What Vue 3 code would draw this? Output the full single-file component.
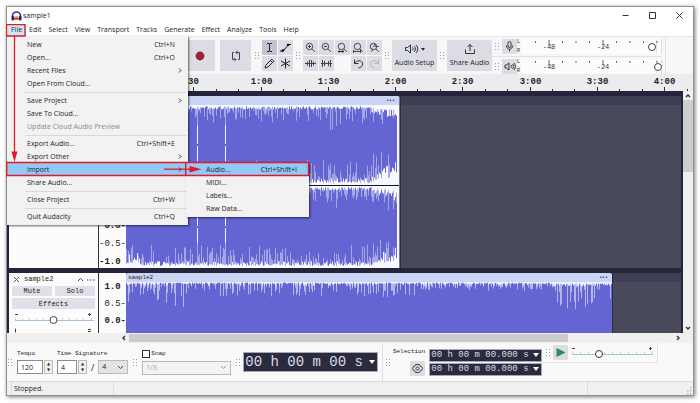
<script setup>
import { ref } from 'vue'

const menus = ['File', 'Edit', 'Select', 'View', 'Transport', 'Tracks', 'Generate', 'Effect', 'Analyze', 'Tools', 'Help']
const fileMenu = [
  [{ t: 'New', k: 'Ctrl+N' }, { t: 'Open...', k: 'Ctrl+O' }, { t: 'Recent Files', sub: true }, { t: 'Open From Cloud...' }],
  [{ t: 'Save Project', sub: true }, { t: 'Save To Cloud...' }, { t: 'Update Cloud Audio Preview', off: true }],
  [{ t: 'Export Audio...', k: 'Ctrl+Shift+E' }, { t: 'Export Other', sub: true }, { t: 'Import', sub: true, on: true }, { t: 'Share Audio...' }],
  [{ t: 'Close Project', k: 'Ctrl+W' }],
  [{ t: 'Quit Audacity', k: 'Ctrl+Q' }],
]
const importMenu = [{ t: 'Audio...', k: 'Ctrl+Shift+I', on: true }, { t: 'MIDI...' }, { t: 'Labels...' }, { t: 'Raw Data...' }]

const tempo = ref('120')
const beats = ref('4')
const snap = ref(false)

const ORIGIN = 119
const PX_PER_10S = 22.42
const ticks = Array.from({ length: 26 }, (_, i) => ({
  x: Math.round(ORIGIN + i * PX_PER_10S) + 0.5,
  major: i % 3 === 0,
  label: i < 6 ? String(i * 10) : `${Math.floor(i / 6)}:${i % 6 ? '30' : '00'}`,
}))

const meterTicks = Array.from({ length: 10 }, (_, i) => ({ x: 14.5 + i * 13.5, label: i === 1 ? '-48' : i === 5 ? '-24' : '' }))

function rng(seed) {
  let s = seed
  return () => {
    s = (s * 1664525 + 1013904223) % 4294967296
    return s / 4294967296
  }
}

function edge(width, seed, base, spike) {
  const r = rng(seed)
  return Array.from({ length: width }, (_, x) => {
    const b = base(x)
    const depth = b * (0.4 + 0.8 * r())
    const hit = r() < 0.46
    return { solid: depth + (hit ? spike(x) * r() ** 1.4 + 2 : 0), soft: hit ? b * 0.3 + r() * 3 : depth - 0.5 }
  })
}

function stereo(height, seed, top, bottom, gaps) {
  const a = edge(271, seed, top.base, top.spike)
  const b = edge(271, seed + 7, bottom.base, bottom.spike)
  let solid = ''
  let soft = ''
  a.forEach((p, x) => {
    const q = b[x]
    const px = x + 0.5
    if (gaps.includes(x)) {
      soft += `M${px} 2V${height * 0.25}M${px} ${height * 0.7}V${height - 3}`
      solid += `M${px} ${height / 2 - 1}V${height / 2 + 1}`
      return
    }
    soft += `M${px} ${p.soft.toFixed(1)}V${(height - q.soft).toFixed(1)}`
    solid += `M${px} ${p.solid.toFixed(1)}V${(height - q.solid).toFixed(1)}`
  })
  return { solid, soft }
}

const tail = (x) => (x > 245 ? 3 + (x - 245) * 0.25 : 0)
const gaps = [71, 99]
const left = stereo(80, 11,
  { base: (x) => 4 + tail(x), spike: (x) => (x > 198 && x < 218 ? 19 : 12) },
  { base: (x) => 6 + tail(x) * 1.6, spike: () => 17 }, gaps)
const right = stereo(82, 57,
  { base: (x) => 4 + tail(x), spike: (x) => (x > 198 && x < 218 ? 22 : 13) },
  { base: (x) => (x < 14 ? 13 : 6 + tail(x) * 1.3), spike: () => 16 }, gaps)

const second = (() => {
  const pts = edge(486, 91,
    (x) => (x > 424 ? 4 : 2),
    (x) => (x < 62 ? 22 : x > 424 ? 22 : x > 290 && x < 420 ? 5 : 11))
  let solid = ''
  let soft = ''
  pts.forEach((p, x) => {
    soft += `M${x + 0.5} ${p.soft.toFixed(1)}V90`
    solid += `M${x + 0.5} ${p.solid.toFixed(1)}V90`
  })
  return { solid, soft }
})()
</script>

<template>
  <div class="page">
    <main class="win">
      <header class="title">
        <svg class="logo" width="11" height="10" viewBox="0 0 11 10">
          <path d="M1.500 6V5a4 4 0 0 1 8 0v1" fill="none" stroke="#2a2fb5" stroke-width="1.600" />
          <rect x="0.500" y="5" width="2.600" height="4.400" rx="1" fill="#1c2190" />
          <rect x="7.900" y="5" width="2.600" height="4.400" rx="1" fill="#1c2190" />
          <path d="M3 7l1-2 1 1 .8-1.400L6.800 6 7.600 5v4H3z" fill="#f08a1c" />
          <path d="M3 7.600h5" stroke="#d5331b" />
        </svg>
        <span class="name">sample1</span>
        <button class="wb" aria-label="Minimize"><svg width="9" height="9"><path d="M1.500 4.500h6" stroke="#333" /></svg></button>
        <button class="wb" aria-label="Maximize"><svg width="9" height="9"><path d="M1.500 1.500h6v6h-6z" fill="none" stroke="#333" /></svg></button>
        <button class="wb" aria-label="Close"><svg width="9" height="9"><path d="M1.500 1.500l6 6M7.500 1.500l-6 6" stroke="#333" /></svg></button>
      </header>

      <nav class="menubar">
        <button v-for="m in menus" :key="m" :class="{ open: m === 'File' }">{{ m }}</button>
      </nav>

      <section class="tools">
        <i class="grip"></i>
        <div class="transport">
          <button class="big" aria-label="Pause"><svg width="12" height="12"><path d="M3 2h2v8H3zM7 2h2v8H7z" /></svg></button>
          <button class="big" aria-label="Play"><svg width="12" height="12"><path d="M3 1l8 5-8 5z" fill="#2f8a55" /></svg></button>
          <button class="big" aria-label="Stop"><svg width="12" height="12"><path d="M2 2h8v8H2z" /></svg></button>
          <button class="big" aria-label="Skip to start"><svg width="12" height="12"><path d="M2 2h1v8H2zM10 2v8L4 6z" /></svg></button>
          <button class="big" aria-label="Skip to end"><svg width="12" height="12"><path d="M9 2h1v8H9zM2 2v8l6-4z" /></svg></button>
          <button class="big" aria-label="Record"><svg width="12" height="12"><circle cx="6" cy="6" r="4.400" fill="#9c2430" /></svg></button>
        </div>
        <button class="big loop" aria-label="Loop">
          <svg width="12" height="12" fill="none" stroke="#444"><path d="M4 2.500H2.500V9.500H5.500M8 9.500h1.500V2.500H6" /><path d="M7.500 .8L5.800 2.500l1.700 1.700M4.300 7.800l1.700 1.700L4.300 11.200" /></svg>
        </button>
        <i class="grip"></i>
        <div class="cells two">
          <button class="sq sel" aria-label="Selection tool"><svg width="11" height="11" fill="none" stroke="#222"><path d="M3 1.500h2l.5.5.5-.5h2M3 9.500h2l.5-.5.5.5h2M5.500 2v7" /></svg></button>
          <button class="sq" aria-label="Envelope tool"><svg width="11" height="11" fill="#111" stroke="#111"><path d="M0 9h3L7 4.500l1.500-2H11" fill="none" /><circle cx="3" cy="8.500" r=".9" /><circle cx="8" cy="3" r=".9" /></svg></button>
          <button class="sq" aria-label="Draw tool"><svg width="11" height="11" fill="none" stroke="#222"><path d="M1 10l.8-2.800L7.800 1.200l2 2-6 6zM6.500 2.500l2 2" /></svg></button>
          <button class="sq" aria-label="Multi-tool"><svg width="11" height="11" fill="none" stroke="#222"><path d="M5.500 .5v10M1 3l9 5M10 3L1 8" /></svg></button>
        </div>
        <i class="grip"></i>
        <div class="cells five">
          <button v-for="z in ['in', 'out', 'sel', 'fit', 'toggle']" :key="z" class="sq" :aria-label="'Zoom ' + z">
            <svg width="11" height="11" fill="none" stroke="#444">
              <circle cx="4.500" cy="4.500" r="3.200" /><path d="M7 7l2.800 2.800" />
              <path v-if="z === 'in'" d="M3 4.500h3M4.500 3v3" />
              <path v-if="z === 'out'" d="M3 4.500h3" />
              <path v-if="z === 'sel'" d="M1 9.500h6M2.500 8.300L1.200 9.500 2.500 10.700M5.500 8.300L6.800 9.500 5.500 10.700" stroke="#222" />
              <path v-if="z === 'fit'" d="M.5 9.500h7M.5 8v3M7.500 8v3" stroke="#222" stroke-width=".8" />
              <path v-if="z === 'toggle'" d="M4 5l2-3v2.500h4M2 6l2 2-2 2" stroke-width=".8" />
            </svg>
          </button>
          <button class="sq" aria-label="Trim"><svg width="11" height="11" stroke="#444"><path d="M0 5.500h11M2.500 3.500v4M4.500 2v7M6.500 2v7M8.500 3.500v4" /></svg></button>
          <button class="sq" aria-label="Silence"><svg width="11" height="11" stroke="#444"><path d="M0 5.500h11M1.500 2v7M3.500 3v5M7.500 3v5M9.500 2v7" /></svg></button>
          <span></span>
          <button class="sq" aria-label="Undo"><svg width="11" height="11" fill="none" stroke="#333"><path d="M1.500 1.500v4h4M1.500 5.500C3 2 9.500 1.500 9.500 6c0 2.500-2 3.500-4 4" /></svg></button>
          <button class="sq" aria-label="Redo" disabled><svg width="11" height="11" fill="none" stroke="#b5b6c0"><path d="M9.500 1.500v4h-4M9.500 5.500C8 2 1.500 1.500 1.500 6c0 2.500 2 3.500 4 4" /></svg></button>
        </div>
        <i class="grip"></i>
        <button class="wide">
          <svg width="22" height="12" fill="none" stroke="#333"><path d="M1.500 4.500h2L6.500 2v8L3.500 7.500h-2zM8.500 4.500c.8 1 .8 2 0 3M10.200 3.200c1.600 1.600 1.600 4 0 5.600M12 2c2.300 2.300 2.300 5.700 0 8" /><path d="M17 5h4l-2 2.800z" fill="#222" stroke="none" /></svg>
          <span>Audio Setup</span>
        </button>
        <i class="grip"></i>
        <button class="wide">
          <svg width="12" height="12" fill="none" stroke="#333"><path d="M1.500 6.500v4h9v-4M6 8V1.500M3.500 4L6 1.500 8.500 4" /></svg>
          <span>Share Audio</span>
        </button>
        <div class="meters">
          <div v-for="row in ['rec', 'play']" :key="row" class="meter">
            <i class="grip"></i>
            <button class="sq" :aria-label="row === 'rec' ? 'Record meter' : 'Playback meter'">
              <svg v-if="row === 'rec'" width="11" height="11" fill="none" stroke="#333"><rect x="4" y=".5" width="3" height="6" rx="1.500" /><path d="M2.500 4.500c0 5 6 5 6 0M5.500 8v2.500" /></svg>
              <svg v-else width="12" height="11" fill="none" stroke="#333"><path d="M1 4h1.500L5 2v7L2.500 7H1zM7 4c.8 1 .8 2 0 3M8.500 3c1.300 1.400 1.300 3.600 0 5M10 2c1.800 2 1.800 5 0 7" /></svg>
            </button>
            <span class="lr"><span>L</span><span>R</span></span>
            <svg class="scale" width="141" height="15">
              <rect width="141" height="15" fill="#fcfcfc" />
              <path d="M135.500 1v13M140.500 0v15" stroke="#dcdde0" fill="none" />
              <g v-for="t in meterTicks" :key="t.x">
                <path :d="`M${t.x} ${t.label ? 1 : 2}v${t.label ? 5 : 2}`" stroke="#666" />
                <text v-if="t.label" :x="t.x" y="10" text-anchor="middle">{{ t.label }}</text>
              </g>
              <circle :cx="row === 'rec' ? 131 : 137" cy="8" r="3.500" fill="#fff" stroke="#444" />
            </svg>
          </div>
        </div>
      </section>

      <svg class="ruler" width="100%" height="17">
        <g v-for="t in ticks" :key="t.x">
          <path :d="`M${t.x} ${t.major ? 13 : 15}V17`" stroke="#333" />
          <text v-if="t.major" :x="t.x" y="10" text-anchor="middle">{{ t.label }}</text>
        </g>
      </svg>

      <section class="work">
        <div class="tracks">
          <article class="track">
            <div class="panel"></div>
            <div class="amp first"><b>0.0-</b><span>-0.5-</span><b>-1.0&nbsp;</b></div>
            <div class="lane">
              <div class="clip one">
                <div class="chead"><span>sample1</span><i>•••</i></div>
                <svg width="273" height="163">
                  <g fill="none">
                    <path :d="left.soft" stroke="#a6a7e2" /><path :d="left.solid" stroke="#6464d3" />
                    <g transform="translate(0 81)"><path :d="right.soft" stroke="#a6a7e2" /><path :d="right.solid" stroke="#6464d3" /></g>
                    <path d="M0 80.500h273" stroke="#15151f" />
                  </g>
                </svg>
              </div>
              <div class="rest"><i></i></div>
            </div>
          </article>
          <article class="track">
            <div class="panel">
              <div class="prow">
                <svg width="7" height="7"><path d="M1 1l5 5M6 1L1 6" stroke="#555" /></svg>
                <span class="pn">sample2</span>
                <svg width="18" height="7"><path d="M1 5l2.500-2.500L6 5" fill="none" stroke="#444" /><path d="M10 4h1.500M13 4h1.500M16 4h1.500" stroke="#444" /></svg>
              </div>
              <div class="prow"><button>Mute</button><button>Solo</button></div>
              <div class="prow"><button>Effects</button></div>
              <svg class="gain" width="82" height="24" fill="none">
                <path d="M3 3.500h3M76 3.500h3M77.500 2v3" stroke="#444" />
                <path d="M3 9.500h80" stroke="#a9c0da" /><path d="M3.500 7v2M10.500 7v2M17.500 7v2M24.500 7v2M31.500 7v2M50.500 7v2M57.500 7v2M64.500 7v2M71.500 7v2M79.500 7v2" stroke="#c5d4e4" />
                <circle cx="41.500" cy="9" r="3.500" fill="#fff" stroke="#444" />
                <path d="M3.500 17.500v4M76 18.500h3M76 20.500h3" stroke="#444" />
              </svg>
            </div>
            <div class="amp"><b>1.0&nbsp;</b><span>0.5-</span><b>0.0-</b></div>
            <div class="lane">
              <div class="clip two">
                <div class="chead"><span>sample2</span><i>•••</i></div>
                <svg width="486" height="90" fill="none"><path :d="second.soft" stroke="#b4b5e8" /><path :d="second.solid" stroke="#6464d3" /></svg>
              </div>
              <div class="rest"><i></i></div>
            </div>
          </article>
        </div>
        <div class="vbar">
          <svg width="10" height="9"><path d="M3 6l2-2 2 2" fill="none" stroke="#333" stroke-width="1.400" /></svg>
          <i></i>
          <svg width="10" height="10"><path d="M3 4l2 2 2-2" fill="none" stroke="#333" stroke-width="1.400" /></svg>
        </div>
      </section>
      <div class="hbar">
        <svg width="8" height="10"><path d="M5 3L3 5l2 2" fill="none" stroke="#333" stroke-width="1.400" /></svg>
        <div><i></i></div>
        <svg width="8" height="10"><path d="M3 3l2 2-2 2" fill="none" stroke="#333" stroke-width="1.400" /></svg>
      </div>

      <section class="dock">
        <i class="grip"></i>
        <div class="field">
          <label for="tempo">Tempo</label>
          <div class="line"><input id="tempo" v-model="tempo" class="w25"><span class="spin"><i>▲</i><i>▼</i></span></div>
        </div>
        <div class="field">
          <label for="beats">Time Signature</label>
          <div class="line">
            <input id="beats" v-model="beats" class="w20"><span class="spin"><i>▲</i><i>▼</i></span>
            <span class="slash">/</span>
            <span class="pick small"><select aria-label="Beat unit"><option>4</option></select><svg width="7" height="5"><path d="M1 1l2.500 2.500L6 1" fill="none" stroke="#444" /></svg></span>
          </div>
        </div>
        <i class="grip"></i>
        <div class="field snap">
          <label><input v-model="snap" type="checkbox">Snap</label>
          <span class="pick off"><select aria-label="Snap to" disabled><option>1/8</option></select><svg width="7" height="5"><path d="M1 1l2.500 2.500L6 1" fill="none" stroke="#999" /></svg></span>
        </div>
        <i class="grip"></i>
        <div class="time"><output>00 h 00 m 00 s</output><svg width="6" height="4"><path d="M0 0h6L3 4z" fill="#fff" /></svg></div>
        <div class="selection">
          <i class="grip"></i>
          <div class="sl"><span>Selection</span>
            <button class="sq" aria-label="Selection settings"><svg width="11" height="11" fill="none" stroke="#444"><path d="M3.500 1.500h4L8.500 3.500h1l1 2-1 2H8.500l-1 2h-4l-1-2h-1l-1-2 1-2h1z" /><circle cx="5.500" cy="5.500" r="1.600" /></svg></button>
          </div>
          <div class="ranges">
            <div v-for="n in 2" :key="n" class="range"><output>00 h 00 m 00.000 s</output><svg width="6" height="4"><path d="M0 0h6L3 4z" fill="#fff" /></svg></div>
          </div>
        </div>
        <div class="speed">
          <i class="grip"></i>
          <button class="sq play" aria-label="Play at speed"><svg width="11" height="11"><path d="M1.500 1l9 4.500-9 4.500z" fill="#2f8a62" /></svg></button>
          <svg width="85" height="17" fill="none">
            <path d="M0 4.500h3M77 4.500h3M78.500 3v3" stroke="#444" /><path d="M0 10.500h81" stroke="#a4c3c9" /><path d="M.5 7.500v3M8.500 8v2M16.500 8v2M24.500 8v2M32.500 8v2M40.500 8v2M48.500 8v2M56.500 8v2M64.500 8v2M72.500 8v2M80.500 7.500v3" stroke="#bcd2d8" />
            <circle cx="27" cy="10" r="3.500" fill="#fff" stroke="#333" />
          </svg>
        </div>
      </section>
      <footer class="status"><span>Stopped.</span><span></span><span></span>
        <svg width="8" height="14" fill="#b5b5b5"><path d="M5 11h1.500v1.500H5zM5 8h1.500v1.500H5zM5 5h1.500v1.500H5zM2 11h1.500v1.500H2zM2 8h1.500v1.500H2z" /></svg>
      </footer>

      <div class="menu file" role="menu">
        <div v-for="(g, gi) in fileMenu" :key="gi" class="group">
          <button v-for="it in g" :key="it.t" role="menuitem" :disabled="it.off" :class="{ on: it.on }">
            <span>{{ it.t }}</span><span>{{ it.k }}</span>
            <svg width="5" height="7"><path v-if="it.sub" d="M1 1.500l2 2-2 2" fill="none" stroke="#333" /></svg>
          </button>
        </div>
      </div>
      <div class="menu import" role="menu">
        <button v-for="it in importMenu" :key="it.t" role="menuitem" :class="{ on: it.on }"><span>{{ it.t }}</span><span>{{ it.k }}</span></button>
      </div>
      <svg class="marks" width="304" height="172" fill="none" stroke="#e01b24">
        <path d="M.6 18.600h18.400v11.400H.6z" stroke-width="1.400" />
        <path d="M8.500 30v118" stroke-width="1.300" />
        <path d="M.7 156.500h179v13H.7zM179.700 156.500h122.800v13H179.700z" stroke-width="1.400" />
        <path d="M158 163.200h26" stroke-width="1.300" />
        <path d="M5.500 145.500h6L8.500 156zM183.500 160l12 3.200-12 3.200z" fill="#e01b24" stroke="none" />
      </svg>
    </main>
  </div>
</template>

<style>
body { margin: 0; background: #fff; }
</style>

<style scoped>
* { box-sizing: border-box; }
button, input, select { font: inherit; color: inherit; border: 0; padding: 0; margin: 0; background: none; border-radius: 0; }
svg { display: block; flex: none; }
i { font-style: normal; }
.page { height: 100vh; padding: 6px 6px 7px; background: #fff; }
.win { position: relative; height: 100%; min-height: 300px; display: flex; flex-direction: column; border: 1px solid #909090; background: #fff; box-shadow: 1px 1px 4px #0008; font: 7px/13px "Open Sans", "Noto Sans", sans-serif; color: #1c1c1c; }
.title { display: flex; align-items: center; height: 17px; padding: 0 9px 0 4px; }
.name { flex: 1; margin-left: 1px; }
.wb { width: 9px; margin-left: 18px; }
.menubar { display: flex; height: 12px; padding-left: 1px; }
.menubar button { padding: 0 4px 0 3px; line-height: 12px; }
.menubar .open { background: #cfe6fa; }
.tools { display: flex; align-items: center; height: 38px; background: #f7f7f8; border-top: 1px solid #e6e6e6; padding-left: 1px; }
.grip { flex: none; width: 4px; height: 7px; margin: 0 3px; background: repeating-linear-gradient(90deg, #9c9da8 0 1px, transparent 1px 3px); mask: repeating-linear-gradient(#000 0 1px, transparent 1px 3px); }
.transport { display: flex; gap: 3px; margin-left: -4px; }
.big { width: 31px; height: 31px; display: grid; place-items: center; background: #dbdce4; border-radius: 1px; }
.loop { margin: 0 1px 0 5px; }
.cells { display: grid; grid-auto-rows: 15px; gap: 1px; }
.two { grid-template-columns: repeat(2, 15px); }
.five { grid-template-columns: repeat(5, 15px); }
.sq { width: 15px; height: 15px; display: grid; place-items: center; background: #dbdce4; border-radius: 1px; flex: none; }
.sel { background: #c2c3d2; }
.wide { width: 45px; height: 31px; display: flex; flex-direction: column; align-items: center; justify-content: center; gap: 1px; background: #dbdce4; border-radius: 1px; white-space: nowrap; }
.meters { border-right: 1px solid #e2e2e5; padding-right: 3px; align-self: stretch; }
.meter { display: flex; align-items: center; height: 19px; }
.meter + .meter { border-top: 1px solid #e2e2e5; }
.lr { display: flex; flex-direction: column; justify-content: space-between; height: 15px; width: 4px; font: 5px/6px "Liberation Mono", monospace; }
.scale text { font: 7px "Liberation Mono", monospace; fill: #333; }
.ruler { background: #ececee; }
.ruler text { font: bold 9px "Liberation Mono", monospace; fill: #222; }
.work { flex: 1; min-height: 0; display: flex; overflow: hidden; }
.tracks { flex: 1; min-width: 0; display: flex; flex-direction: column; gap: 5px; padding: 5px 2px 0; background: #24243a; overflow: hidden; }
.track { display: flex; flex: none; }
.panel { width: 89px; padding: 1px 3px 0; background: #fcfcfd; font: 7px/10px "Liberation Mono", monospace; display: flex; flex-direction: column; gap: 2px; }
.prow { display: flex; gap: 3px; align-items: center; height: 10px; }
.prow:last-of-type { height: 11px; }
.prow button { flex: 1; align-self: stretch; background: #dfe0e8; border-radius: 1px; }
.prow > svg:first-child { margin-left: 1px; }
.pn { flex: 1; margin-left: 1px; }
.amp { width: 28px; border-left: 1px solid #333; background: #fbfbfc; display: flex; flex-direction: column; align-items: flex-end; gap: 6px; padding-top: 9px; font: 9px/11px "Liberation Mono", monospace; }
.amp.first { justify-content: flex-end; gap: 7px; padding: 0; }
.lane { flex: 1; min-width: 0; display: flex; background: #484a5c; overflow: hidden; }
.clip { flex: none; background: #eef0fd; border-radius: 3px 3px 0 0; overflow: hidden; }
.one { background: #f6f7ff; border-right: 1px solid #777985; }
.chead { display: flex; justify-content: space-between; height: 9px; padding: 0 4px 0 2px; background: #ccd4f4; font: 6px/9px "Liberation Mono", monospace; }
.chead i { font: 5px/9px "DejaVu Sans", sans-serif; }
.rest { flex: 1; border-left: 1px solid #2c2c40; }
.rest i { display: block; height: 9px; background: #3e3f55; }
.vbar { width: 10px; display: flex; flex-direction: column; background: #f0f0f0; }
.vbar i { height: 72px; background: #cdcdcd; margin-bottom: auto; }
.hbar { display: flex; height: 10px; background: #f0f0f0; padding: 0 11px 0 113px; }
.hbar div { flex: 1; padding-left: 1px; }
.hbar i { display: block; height: 8px; margin-top: 1px; width: 80.5%; background: #cbcbcb; }
.dock { display: flex; align-items: center; height: 38px; background: #f9f9f9; font: 6px/8px "Liberation Mono", monospace; }
.dock > .grip:first-child { margin-left: 1px; }
.field { display: flex; flex-direction: column; gap: 2px; margin: 0 2px; }
.line { display: flex; align-items: center; font: 7px/13px "Open Sans", sans-serif; }
.line input { height: 14px; border: 1px solid #8c8c8c; background: #fff; padding-left: 3px; }
.w25 { width: 26px; }
.w20 { width: 20px; }
.spin { display: flex; flex-direction: column; width: 9px; margin-left: 1px; border: 1px solid #bbb; background: #f2f2f2; font: 4px/6px "DejaVu Sans", sans-serif; text-align: center; }
.slash { font: 9px/13px "Open Sans", sans-serif; margin: 0 4px; }
.pick { display: flex; align-items: center; height: 14px; border: 1px solid #b9b9b9; background: #e4e4e4; padding: 0 3px; font: 7px/12px "Open Sans", sans-serif; }
.pick select { flex: 1; appearance: none; min-width: 0; }
.small { width: 30px; }
.snap label { display: flex; align-items: center; gap: 1px; height: 9px; }
.snap input { appearance: none; width: 8px; height: 8px; border: 1px solid #333; background: #fff; }
.snap .pick { width: 89px; background: #f3f3f3; color: #888; }
.time, .range { display: flex; align-items: center; justify-content: space-between; background: #2b2b40; color: #dcdce6; border: 1px solid #a8a8b4; padding: 0 2px 0 1px; white-space: pre; }
.time { width: 135px; height: 20px; font: 14px/18px "Liberation Mono", monospace; margin-right: 4px; }
.selection { display: flex; align-items: center; align-self: stretch; border-left: 1px solid #e0e0e3; }
.sl { display: flex; flex-direction: column; align-items: flex-end; gap: 5px; width: 32px; margin: 0 4px 0 0; }
.ranges { display: flex; flex-direction: column; gap: 1px; }
.range { width: 113px; height: 13px; font: 9px/11px "Liberation Mono", monospace; }
.speed { align-self: flex-start; display: flex; align-items: center; height: 20px; margin-left: 1px; border-bottom: 1px solid #e2e2e5; border-right: 1px solid #e2e2e5; }
.play { margin: 0 4px 0 0; }
.status { display: flex; height: 14px; border-top: 1px solid #dcdcdc; background: #f0f0f0; padding-left: 4px; }
.status span { border-left: 1px solid #dcdcdc; padding-left: 2px; line-height: 14px; }
.status span:nth-child(1) { width: 102px; }
.status span:nth-child(2) { flex: 1; }
.status span:nth-child(3) { width: 98px; }
.menu { position: absolute; background: #f2f2f2; box-shadow: 1px 1px 2px #0009; }
.menu button { display: flex; width: 100%; height: 13px; align-items: center; justify-content: space-between; padding: 0 5px 0 20px; line-height: 13px; }
.menu span:first-child { flex: 1; text-align: left; }
.menu svg { margin-left: 3px; }
.menu button:disabled { color: #8a8a8a; }
.menu .on { background: #91c9f7; }
.file { left: 0; top: 29px; width: 181px; padding: 2px 0; }
.group + .group::before { content: ""; display: block; height: 1px; margin: 2px 2px 1px 18px; background: #d8d8d8; }
.import { left: 179px; top: 156px; width: 123px; padding-bottom: 2px; }
.import button { padding-right: 12px; }
.marks { position: absolute; left: -1px; top: -1px; pointer-events: none; }
</style>
